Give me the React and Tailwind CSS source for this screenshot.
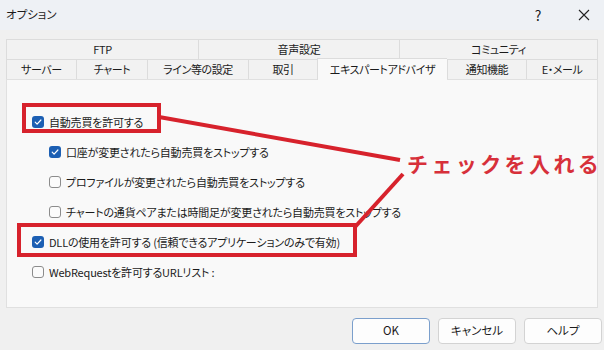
import React from 'react';

const topTabs = [
  { label: 'FTP', w: 'w-[192px]' },
  { label: '音声設定', w: 'w-[201px]' },
  { label: 'コミュニティ', w: 'w-[199px]' },
];

const bottomTabs = [
  { label: 'サーバー', w: 'w-[70px]' },
  { label: 'チャート', w: 'w-[71px]' },
  { label: 'ライン等の設定', w: 'w-[101px]' },
  { label: '取引', w: 'w-[69px]' },
  { label: 'エキスパートアドバイザ', w: 'w-[130px]', active: true },
  { label: '通知機能', w: 'w-[79px]' },
  { label: 'E・メール', w: 'w-[72px]' },
];

const options = [
  { label: '自動売買を許可する', checked: true },
  { label: '口座が変更されたら自動売買をストップする', checked: true, indent: true },
  { label: 'プロファイルが変更されたら自動売買をストップする', indent: true },
  { label: 'チャートの通貨ペアまたは時間足が変更されたら自動売買をストップする', indent: true },
  { label: 'DLLの使用を許可する (信頼できるアプリケーションのみで有効)', checked: true },
  { label: 'WebRequestを許可するURLリスト :' },
];

function Checkbox({ checked }) {
  if (checked) {
    return (
      <span className="w-[12px] h-[12px] rounded-[3px] bg-[#1c5fb3] flex items-center justify-center shrink-0">
        <svg width="10" height="10" viewBox="0 0 10 10">
          <path d="M2.2 5.2 L4.1 7.1 L7.9 3" fill="none" stroke="#fff" strokeWidth="1.2" strokeLinecap="round" strokeLinejoin="round" />
        </svg>
      </span>
    );
  }
  return <span className="w-[12px] h-[12px] rounded-[3px] border border-[#8c8c8c] bg-[#fbfbfb] shrink-0" />;
}

export default function App() {
  return (
    <div className="relative w-[604px] h-[350px] overflow-hidden bg-[#f0f0f0] text-[#1b1b1b] font-['Noto_Sans_CJK_JP',sans-serif] [font-feature-settings:'palt'] text-[11px]">
      {/* タイトルバー */}
      <div className="h-[30px] bg-[#eef1f5] flex items-center pl-[6px]">
        <span className="text-[11.5px]">オプション</span>
        <span className="ml-auto w-[20px] text-center text-[14px]">?</span>
        <span className="ml-[26px] mr-[10px] w-[20px] flex justify-center">
          <svg width="12" height="12" viewBox="0 0 12 12">
            <path d="M1 1 L11 11 M11 1 L1 11" stroke="#222" strokeWidth="1.1" />
          </svg>
        </span>
      </div>

      {/* タブ */}
      <div className="mt-[9px] mx-[6px]">
        <div className="flex h-[20px] tracking-[-0.3px]">
          {topTabs.map((t, i) => (
            <div key={t.label} className={`${t.w} border-t border-l border-[#dcdcdc] bg-[#f2f2f2] flex items-center justify-center ${i === topTabs.length - 1 ? 'border-r' : ''}`}>
              {t.label}
            </div>
          ))}
        </div>
        <div className="flex h-[20px] items-end tracking-[-0.4px]">
          {bottomTabs.map((t, i) =>
            t.active ? (
              <div key={t.label} className={`${t.w} h-[22px] -mb-px relative z-10 border-t border-l border-[#dcdcdc] bg-[#f9f9f9] flex items-center justify-center`}>
                {t.label}
              </div>
            ) : (
              <div key={t.label} className={`${t.w} h-[20px] border-t border-l border-[#dcdcdc] bg-[#f2f2f2] flex items-center justify-center ${i === bottomTabs.length - 1 ? 'border-r' : ''}`}>
                {t.label}
              </div>
            )
          )}
        </div>
        <div className="h-[229px] border border-[#e0e0e0] bg-[#f9f9f9] pt-[27px] pl-[25px] tracking-[-0.2px]">
          {options.map((o) => (
            <div key={o.label} className={`h-[30px] flex items-center gap-[5px] ${o.indent ? 'pl-[17px]' : ''}`}>
              <Checkbox checked={o.checked} />
              <span>{o.label}</span>
            </div>
          ))}
        </div>
      </div>

      {/* ボタン */}
      <div className="mt-[10px] flex justify-end gap-[8px] pr-[2px] text-[11.5px]">
        <button className="w-[78px] h-[26px] rounded-[4px] border border-[#7b9fcc] bg-[#fdfdfd]">OK</button>
        <button className="w-[78px] h-[26px] rounded-[4px] border border-[#d3d3d3] bg-[#fdfdfd]">キャンセル</button>
        <button className="w-[78px] h-[26px] rounded-[4px] border border-[#d3d3d3] bg-[#fdfdfd]">ヘルプ</button>
      </div>

      {/* 注釈 */}
      <div className="absolute left-[22px] top-[103px] w-[139px] h-[30px] border-4 border-[#d7222c]" />
      <div className="absolute left-[17px] top-[223px] w-[340px] h-[34px] border-4 border-[#d7222c]" />
      <svg className="absolute left-0 top-0" width="604" height="350">
        <line x1="159" y1="117" x2="400" y2="160" stroke="#d7222c" strokeWidth="4" />
        <line x1="403" y1="174" x2="355" y2="227" stroke="#d7222c" strokeWidth="4" />
      </svg>
      <div className="absolute left-[407px] top-[148px] text-[21px] font-bold tracking-[3.4px] text-[#d7303a] [font-feature-settings:normal] leading-[30px]">
        チェックを入れる
      </div>
    </div>
  );
}
